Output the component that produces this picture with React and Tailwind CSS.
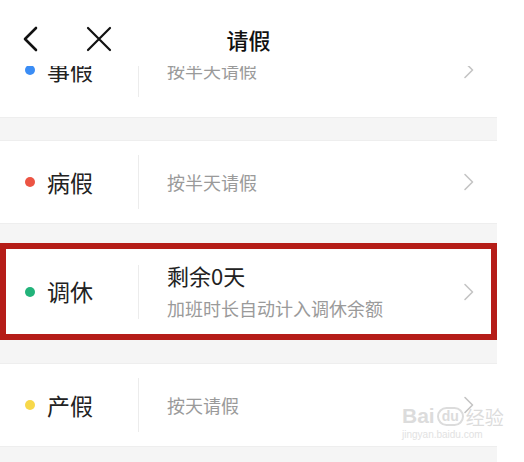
import React from "react";

function Chevron() {
  return (
    <svg width="12" height="18" viewBox="0 0 12 18" fill="none">
      <path d="M2 1.5 L9.5 9 L2 16.5" stroke="#c4c4c4" strokeWidth="1.6" strokeLinecap="round" strokeLinejoin="round" />
    </svg>
  );
}

function Row({ color, label, children }) {
  return (
    <div className="flex items-center h-full bg-white">
      <div className="w-[138px] flex items-center pl-[25px] shrink-0">
        <span className={`w-[10px] h-[10px] rounded-full ${color}`} />
        <span className="ml-[12px] text-[23px] leading-none text-[#222]">{label}</span>
      </div>
      <div className="w-px h-[54px] bg-[#ececec] shrink-0" />
      <div className="flex-1 pl-[28px]">{children}</div>
      <div className="pr-[22px] flex items-center">
        <Chevron />
      </div>
    </div>
  );
}

function Sub({ children }) {
  return <div className="text-[18px] leading-none text-[#9a9a9a]">{children}</div>;
}

export default function App() {
  return (
    <div className="w-[524px] h-[462px] bg-white relative overflow-hidden font-['Noto_Sans_CJK_SC','Noto_Sans',sans-serif]">
      <div className="w-[497px] h-full bg-[#f5f5f5] flex flex-col">
        {/* header */}
        <div className="h-[66px] bg-white grid grid-cols-[1fr_auto_1fr] items-center pt-[12px] shrink-0">
          <div className="flex items-center pl-[21px] gap-[47px]">
            <svg width="18" height="26" viewBox="0 0 18 26" fill="none">
              <path d="M15 2 L4 13 L15 24" stroke="#111" strokeWidth="2.6" strokeLinecap="round" strokeLinejoin="round" />
            </svg>
            <svg width="26" height="26" viewBox="0 0 26 26" fill="none">
              <path d="M2 2 L24 24 M24 2 L2 24" stroke="#111" strokeWidth="2.2" strokeLinecap="round" />
            </svg>
          </div>
          <div className="text-[22px] font-medium text-[#111] leading-none">请假</div>
          <div />
        </div>

        {/* clipped first row */}
        <div className="h-[52px] overflow-hidden bg-white shrink-0 border-b border-[#eeeeee]">
          <div className="h-[84px] -mt-[38px]">
            <Row color="bg-[#3b8df5]" label="事假">
              <Sub>按半天请假</Sub>
            </Row>
          </div>
        </div>

        <div className="h-[22px] shrink-0" />

        <div className="h-[84px] shrink-0 border-y border-[#eeeeee]">
          <Row color="bg-[#ec5443]" label="病假">
            <Sub>按半天请假</Sub>
          </Row>
        </div>

        <div className="h-[19px] shrink-0" />

        <div className="h-[97px] shrink-0 relative">
          <Row color="bg-[#22b37a]" label="调休">
            <div className="flex flex-col gap-[13px] pb-[2px]">
              <div className="text-[22px] leading-none text-[#222]">剩余0天</div>
              <Sub>加班时长自动计入调休余额</Sub>
            </div>
          </Row>
          <div className="absolute inset-0 border-[6px] border-[#b51d18] pointer-events-none" />
        </div>

        <div className="h-[23px] shrink-0" />

        <div className="h-[84px] shrink-0 border-y border-[#eeeeee]">
          <Row color="bg-[#f7d84a]" label="产假">
            <Sub>按天请假</Sub>
          </Row>
        </div>
      </div>

      {/* watermark */}
      <div className="absolute left-[402px] top-[405px] flex flex-col items-start pointer-events-none">
        <div className="flex items-end gap-[2px] text-[#dcdcdc] font-['Liberation_Sans',sans-serif] leading-none">
          <span className="text-[21px] font-bold">Bai</span>
          <span className="text-[14px] font-bold border-2 border-[#dcdcdc] rounded-full px-[3px] pb-[1px]">du</span>
          <span className="text-[19px] font-['Noto_Sans_CJK_SC',sans-serif]">经验</span>
        </div>
        <div className="text-[10px] text-[#e2e2e2] font-['Liberation_Sans',sans-serif] leading-none mt-[4px]">jingyan.baidu.com</div>
      </div>
    </div>
  );
}
